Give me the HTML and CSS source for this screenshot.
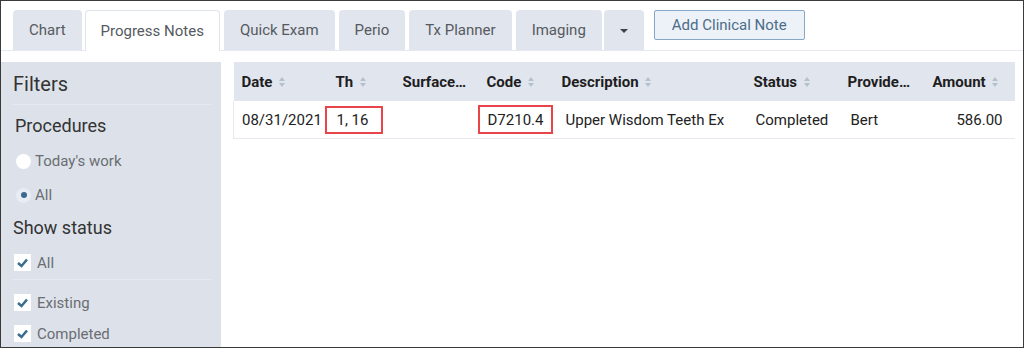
FILE: index.html
```html
<!DOCTYPE html>
<html lang="en">

<head>
    <meta charset="UTF-8">
    <meta name="viewport" content="width=device-width, initial-scale=1.0">
    <title>Progress Notes</title>
    <link rel="stylesheet" href="styles.css">
</head>

<body>
    <div class="frame">
        <div class="tabs">
            <div class="tab">Chart</div>
            <div class="tab active">Progress Notes</div>
            <div class="tab">Quick Exam</div>
            <div class="tab">Perio</div>
            <div class="tab">Tx Planner</div>
            <div class="tab">Imaging</div>
            <div class="tab more"><span class="caret"></span></div>
            <button type="button" class="add-note">Add Clinical Note</button>
        </div>
        <div class="main">
            <div class="sidebar">
                <h2 class="filters-title">Filters</h2>
                <h3 class="group-title">Procedures</h3>
                <div class="opt radio-row">
                    <span class="radio"></span>
                    <span>Today's work</span>
                </div>
                <div class="opt radio-row">
                    <span class="radio checked"></span>
                    <span>All</span>
                </div>
                <h3 class="group-title status-title">Show status</h3>
                <div class="opt check-row">
                    <span class="check"><svg viewBox="0 0 17 17"><polyline points="4,9 7.5,12 13,5.5" /></svg></span>
                    <span>All</span>
                </div>
                <div class="rule"></div>
                <div class="opt check-row">
                    <span class="check"><svg viewBox="0 0 17 17"><polyline points="4,9 7.5,12 13,5.5" /></svg></span>
                    <span>Existing</span>
                </div>
                <div class="opt check-row">
                    <span class="check"><svg viewBox="0 0 17 17"><polyline points="4,9 7.5,12 13,5.5" /></svg></span>
                    <span>Completed</span>
                </div>
            </div>
            <div class="content">
                <table class="notes">
                    <colgroup>
                        <col style="width: 94px">
                        <col style="width: 67px">
                        <col style="width: 84px">
                        <col style="width: 75px">
                        <col style="width: 192px">
                        <col style="width: 94px">
                        <col style="width: 85px">
                        <col style="width: 90px">
                    </colgroup>
                    <thead>
                        <tr>
                            <th>Date <span class="sort"></span></th>
                            <th>Th <span class="sort"></span></th>
                            <th>Surface…</th>
                            <th>Code <span class="sort"></span></th>
                            <th>Description <span class="sort"></span></th>
                            <th>Status <span class="sort"></span></th>
                            <th>Provide…</th>
                            <th>Amount <span class="sort"></span></th>
                        </tr>
                    </thead>
                    <tbody>
                        <tr>
                            <td>08/31/2021</td>
                            <td><span class="mark mark-th">1, 16</span></td>
                            <td></td>
                            <td><span class="mark mark-code">D7210.4</span></td>
                            <td class="desc">Upper Wisdom Teeth Ex</td>
                            <td class="status">Completed</td>
                            <td class="provider">Bert</td>
                            <td class="amount">586.00</td>
                        </tr>
                    </tbody>
                </table>
            </div>
        </div>
    </div>
</body>

</html>
```

FILE: styles.css
```css
body {
    margin: 0;
    font-family: Roboto, "Liberation Sans", sans-serif;
    background: #ffffff;
}

.frame {
    width: 1024px;
    height: 348px;
    box-sizing: border-box;
    border: 1px solid #3a3a3a;
    overflow: hidden;
    background: #ffffff;
}

/* tab strip */
.tabs {
    display: flex;
    align-items: flex-start;
    gap: 4px;
    padding: 9px 0 0 12px;
    height: 50px;
    box-sizing: border-box;
    border-bottom: 1px solid #e6e9f1;
}

.tab {
    height: 40px;
    box-sizing: border-box;
    padding: 0 16px;
    display: flex;
    align-items: center;
    background: #e1e5ed;
    border-radius: 4px 4px 0 0;
    color: #555a60;
    font-size: 15px;
}

.tab.active {
    background: #ffffff;
    border: 1px solid #dfe3ea;
    border-bottom: none;
    height: 41px;
    padding: 0 15px;
    margin-bottom: -1px;
    margin-left: -1px;
}

.tab.more {
    margin-left: -2px;
    padding: 0;
    width: 40px;
    justify-content: center;
}

.caret {
    width: 0;
    height: 0;
    border-left: 4px solid transparent;
    border-right: 4px solid transparent;
    border-top: 4px solid #3e4247;
    margin-top: 2px;
}

.add-note {
    margin-left: 6px;
    height: 30px;
    padding: 0 17px;
    background: #edf2f8;
    border: 1px solid #86a8c4;
    border-radius: 2px;
    color: #4b6d8a;
    font-family: Roboto, "Liberation Sans", sans-serif;
    font-size: 15px;
}

/* body */
.main {
    display: flex;
    margin-top: 11px;
    height: 285px;
}

.sidebar {
    width: 220px;
    flex-shrink: 0;
    background: #dde2ea;
    padding: 10px 10px 0 12px;
    box-sizing: border-box;
    color: #333;
}

.filters-title {
    margin: 0;
    font-size: 20px;
    font-weight: 400;
    line-height: 24px;
    padding-bottom: 8px;
    border-bottom: 1px solid #e6e9ef;
}

.group-title {
    margin: 9px 0 0 2px;
    font-size: 18px;
    font-weight: 400;
    line-height: 24px;
}

.status-title {
    margin: 4px 0 0 0;
}

.opt {
    display: flex;
    align-items: center;
    font-size: 15px;
    color: #6a6d72;
}

.radio-row {
    height: 34px;
    gap: 4px;
    padding-left: 3px;
}

.radio-row:first-of-type {
    margin-top: 6px;
}

.radio {
    width: 15px;
    height: 15px;
    border-radius: 50%;
    background: #ffffff;
    display: flex;
    align-items: center;
    justify-content: center;
}

.radio.checked {
    background: #e9edf3;
}

.radio.checked::after {
    content: '';
    width: 6px;
    height: 6px;
    border-radius: 50%;
    background: #3b6a8c;
}

.check-row {
    height: 31px;
    gap: 6px;
    padding-left: 1px;
    margin-top: 7px;
}

.check-row + .check-row {
    margin-top: 0;
}

.check {
    width: 17px;
    height: 17px;
    background: #ffffff;
    display: block;
}

.check svg {
    width: 17px;
    height: 17px;
    display: block;
}

.check polyline {
    fill: none;
    stroke: #3b6d91;
    stroke-width: 2.6;
}

.rule {
    height: 1px;
    background: #e6e9ef;
    margin-top: 1px;
}

.content {
    padding-left: 12px;
}

/* table */
.notes {
    width: 781px;
    table-layout: fixed;
    border-collapse: collapse;
    font-size: 15px;
    color: #222;
}

.notes th {
    height: 39px;
    padding: 0 0 0 8px;
    background: #e1e5ee;
    text-align: left;
    font-weight: 700;
    color: #1e1e1e;
    white-space: nowrap;
    overflow: hidden;
}

.notes td {
    height: 37px;
    padding: 0 0 0 8px;
    border-bottom: 1px solid #e6e9ef;
    white-space: nowrap;
}

.notes td:first-child {
    border-left: 1px solid #e6e9ef;
}

.sort {
    display: inline-block;
    vertical-align: middle;
    margin-left: 3px;
    width: 7px;
    height: 10px;
    position: relative;
    top: -1px;
}

.sort::before,
.sort::after {
    content: '';
    position: absolute;
    left: 0;
    border-left: 3.5px solid transparent;
    border-right: 3.5px solid transparent;
}

.sort::before {
    top: 0;
    border-bottom: 4px solid #b4c0cd;
}

.sort::after {
    bottom: 0;
    border-top: 4px solid #b4c0cd;
}

.mark {
    display: inline-block;
    border: 2px solid #e8444a;
    line-height: 18px;
}

.mark-th {
    margin-left: -11px;
    padding: 3px 13px 3px 10px;
}

.mark-code {
    margin-left: -9px;
    padding: 4px 8px 3px 8px;
}

.desc {
    padding-left: 12px !important;
}

.status {
    padding-left: 10px !important;
}

.provider {
    padding-left: 11px !important;
}

.amount {
    text-align: right;
    padding-right: 12px !important;
}
```
